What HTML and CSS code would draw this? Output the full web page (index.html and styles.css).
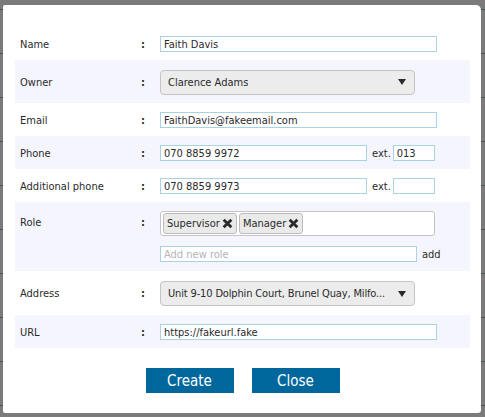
FILE: index.html
```html
<!DOCTYPE html>
<html>
<head>
<meta charset="utf-8">
<link rel="stylesheet" href="styles.css">
</head>
<body>
<div class="modal">
  <div class="form">
    <div class="row">
      <div class="label">Name</div><div class="colon">:</div>
      <div class="value"><input class="text w-full" type="text" value="Faith Davis"></div>
    </div>
    <div class="row shaded tall">
      <div class="label">Owner</div><div class="colon">:</div>
      <div class="value"><div class="select"><span class="select-text">Clarence Adams</span><span class="arrow"></span></div></div>
    </div>
    <div class="row">
      <div class="label">Email</div><div class="colon">:</div>
      <div class="value"><input class="text w-full" type="text" value="FaithDavis@fakeemail.com"></div>
    </div>
    <div class="row shaded">
      <div class="label">Phone</div><div class="colon">:</div>
      <div class="value"><input class="text w-phone" type="text" value="070 8859 9972"><span class="ext">ext.</span><input class="text w-ext" type="text" value="013"></div>
    </div>
    <div class="row">
      <div class="label">Additional phone</div><div class="colon">:</div>
      <div class="value"><input class="text w-phone" type="text" value="070 8859 9973"><span class="ext">ext.</span><input class="text w-ext" type="text" value=""></div>
    </div>
    <div class="row shaded role">
      <div class="label top">Role</div><div class="colon top">:</div>
      <div class="value stack">
        <div class="tags">
          <span class="tag">Supervisor<svg class="x" viewBox="0 0 10 10" width="11" height="11"><path d="M1.5 1.5 L8.5 8.5 M8.5 1.5 L1.5 8.5" stroke="#2b2b2b" stroke-width="2.6" stroke-linecap="butt"/></svg></span>
          <span class="tag">Manager<svg class="x" viewBox="0 0 10 10" width="11" height="11"><path d="M1.5 1.5 L8.5 8.5 M8.5 1.5 L1.5 8.5" stroke="#2b2b2b" stroke-width="2.6" stroke-linecap="butt"/></svg></span>
        </div>
        <div class="addline"><input class="text w-role" type="text" placeholder="Add new role"><span class="add">add</span></div>
      </div>
    </div>
    <div class="row tall addr">
      <div class="label">Address</div><div class="colon">:</div>
      <div class="value"><div class="select"><span class="select-text tight">Unit 9-10 Dolphin Court, Brunel Quay, Milfo...</span><span class="arrow"></span></div></div>
    </div>
    <div class="row shaded">
      <div class="label">URL</div><div class="colon">:</div>
      <div class="value"><input class="text w-full" type="text" value="https://fakeurl.fake"></div>
    </div>
  </div>
  <div class="buttons">
    <button class="btn">Create</button>
    <button class="btn">Close</button>
  </div>
</div>
</body>
</html>
```
FILE: styles.css
```css
* { box-sizing: border-box; }
html, body { margin: 0; padding: 0; }
body {
  width: 485px;
  height: 417px;
  overflow: hidden;
  background-color: #7b7b7b;
  background-image: repeating-linear-gradient(to bottom, transparent 0, transparent 9px, #4a5550 9px, #4a5550 10px, transparent 10px, transparent 44px);
  font-family: "DejaVu Sans Condensed", "DejaVu Sans", sans-serif;
  font-size: 11px;
  color: #2a2a2a;
  padding-top: 5px;
  padding-left: 3px;
}
.modal {
  width: 478px;
  height: 408px;
  background: #ffffff;
  border-radius: 2px 5px 3px 2px;
  padding: 22px 11px 0 12px;
}
.form { display: flex; flex-direction: column; }
.row {
  display: grid;
  grid-template-columns: 121px 19px 1fr;
  align-items: center;
  height: 33px;
  padding-left: 5px;
  padding-top: 1px;
}
.row.tall { height: 43px; }
.row.addr { height: 44px; }
.row.role { height: 69px; align-items: start; padding-top: 9px; }
.shaded { background: #f5f6fd; }
.label { white-space: nowrap; }
.colon { font-weight: bold; }
.top { padding-top: 5px; }
.value { display: flex; align-items: center; }
.value.stack { flex-direction: column; align-items: flex-start; gap: 10px; }
input.text {
  height: 16px;
  border: 1px solid #a9d2e3;
  background: #fff;
  font-family: inherit;
  font-size: 11px;
  color: #2a2a2a;
  padding: 0 3px;
  margin: 0;
  outline: none;
}
input.text::placeholder { color: #b4b4b4; }
.w-full { width: 277px; }
.w-phone { width: 207px; }
.w-ext { width: 42px; }
.w-role { width: 257px; }
.ext { margin: 0 2px 0 5px; }
.add { margin-left: 5px; }
.select {
  width: 255px;
  height: 25px;
  border: 1px solid #c4c4c4;
  border-radius: 4px;
  background: #ececec;
  display: flex;
  align-items: center;
  justify-content: space-between;
  padding: 0 8px 0 7px;
}
.select-text { white-space: nowrap; overflow: hidden; }
.select-text.tight { letter-spacing: -0.15px; }
.arrow {
  flex: none;
  width: 0; height: 0;
  border-left: 4px solid transparent;
  border-right: 4px solid transparent;
  border-top: 6px solid #2b2b2b;
}
.tags {
  width: 275px;
  height: 25px;
  border: 1px solid #c4c4c4;
  border-radius: 3px;
  background: #fff;
  display: flex;
  align-items: center;
  gap: 2px;
  padding-left: 2px;
}
.tag {
  height: 21px;
  display: inline-flex;
  align-items: center;
  gap: 2px;
  padding: 0 3px 0 3px;
  background: #eaeaea;
  border: 1px solid #bcbcbc;
  border-radius: 3px;
}
.x { display: block; }
.addline { display: flex; align-items: center; }
.buttons {
  display: flex;
  justify-content: center;
  gap: 18px;
  margin-top: 20px;
}
.btn {
  width: 88px;
  height: 25px;
  background: #00679c;
  color: #fff;
  border: none;
  border-radius: 0;
  font-family: "DejaVu Sans Condensed", "DejaVu Sans", sans-serif;
  font-size: 15px;
  padding: 0;
}
```
